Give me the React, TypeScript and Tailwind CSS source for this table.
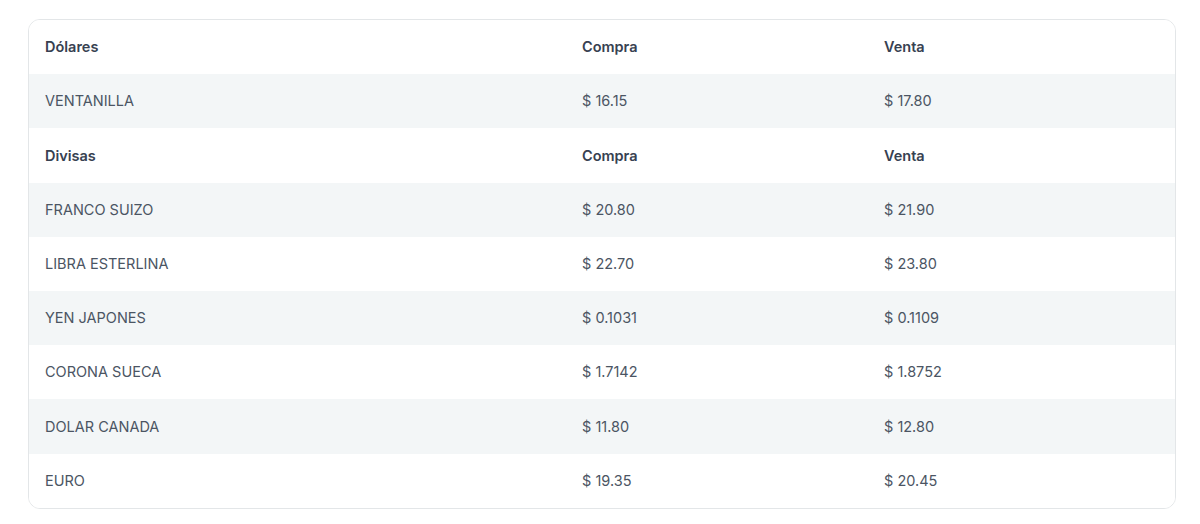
import React from "react";

type Row = { name: string; compra: string; venta: string; header?: boolean };

const rows: Row[] = [
  { name: "Dólares", compra: "Compra", venta: "Venta", header: true },
  { name: "VENTANILLA", compra: "$ 16.15", venta: "$ 17.80" },
  { name: "Divisas", compra: "Compra", venta: "Venta", header: true },
  { name: "FRANCO SUIZO", compra: "$ 20.80", venta: "$ 21.90" },
  { name: "LIBRA ESTERLINA", compra: "$ 22.70", venta: "$ 23.80" },
  { name: "YEN JAPONES", compra: "$ 0.1031", venta: "$ 0.1109" },
  { name: "CORONA SUECA", compra: "$ 1.7142", venta: "$ 1.8752" },
  { name: "DOLAR CANADA", compra: "$ 11.80", venta: "$ 12.80" },
  { name: "EURO", compra: "$ 19.35", venta: "$ 20.45" },
];

export default function App() {
  return (
    <div
      className="w-[1200px] h-[524px] bg-white pt-[19px] pl-[28px]"
      style={{ fontFamily: "Inter, 'Noto Sans', sans-serif" }}
    >
      <div className="w-[1148px] rounded-xl border border-[#e3e6e8] overflow-hidden">
        {rows.map((r, i) => (
          <div
            key={i}
            className={`grid grid-cols-[537px_302px_1fr] items-center h-[54.2px] text-[14.5px] ${
              i % 2 === 1 ? "bg-[#f3f6f7]" : "bg-white"
            } ${r.header ? "font-semibold text-[#374151]" : "text-[#4b5563]"}`}
          >
            <div className="pl-4">{r.name}</div>
            <div className="pl-4">{r.compra}</div>
            <div className="pl-4">{r.venta}</div>
          </div>
        ))}
      </div>
    </div>
  );
}
